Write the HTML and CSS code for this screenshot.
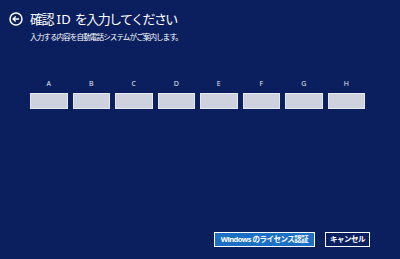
FILE: index.html
```html
<!DOCTYPE html>
<html lang="ja">
<head>
<meta charset="utf-8">
<link rel="stylesheet" href="styles.css">
</head>
<body>
<div class="page">
  <div class="header">
    <svg class="back" width="14" height="14" viewBox="0 0 14 14">
      <circle cx="7" cy="7" r="6" fill="none" stroke="#fff" stroke-width="1.5"/>
      <path d="M10.2 7H4.2M6.7 4.4L4.1 7L6.7 9.6" fill="none" stroke="#fff" stroke-width="1.4"/>
    </svg>
    <h1 class="title">確認 <span class="latin">ID</span> を入力してください</h1>
  </div>
  <p class="sub">入力する内容を自動電話システムがご案内します。</p>
  <div class="grid">
    <div class="cell"><span class="lbl">A</span><div class="box"></div></div>
    <div class="cell"><span class="lbl">B</span><div class="box"></div></div>
    <div class="cell"><span class="lbl">C</span><div class="box"></div></div>
    <div class="cell"><span class="lbl">D</span><div class="box"></div></div>
    <div class="cell"><span class="lbl">E</span><div class="box"></div></div>
    <div class="cell"><span class="lbl">F</span><div class="box"></div></div>
    <div class="cell"><span class="lbl">G</span><div class="box"></div></div>
    <div class="cell"><span class="lbl">H</span><div class="box"></div></div>
  </div>
  <div class="actions">
    <button class="btn primary">Windows のライセンス認証</button>
    <button class="btn">キャンセル</button>
  </div>
</div>
</body>
</html>
```
FILE: styles.css
```css
html, body {
  margin: 0;
  padding: 0;
  background: #0b1f5f;
}
.page {
  width: 400px;
  height: 259px;
  box-sizing: border-box;
  display: flex;
  flex-direction: column;
  font-family: "Noto Sans", "Noto Sans CJK JP", sans-serif;
  color: #fff;
}
.header {
  display: flex;
  align-items: center;
  gap: 7px;
  padding: 11px 0 0 9px;
  height: 16px;
}
.back {
  display: block;
}
.title {
  margin: 0;
  font-size: 13px;
  font-weight: 400;
  line-height: 16px;
  letter-spacing: -1.6px;
  word-spacing: 2px;
}
.latin {
  letter-spacing: 0.3px;
}
.sub {
  margin: 5px 0 0 30px;
  font-size: 7.5px;
  line-height: 10px;
  letter-spacing: -0.85px;
}
.grid {
  margin: 38px 0 0 30px;
  display: grid;
  grid-template-columns: repeat(8, 37.5px);
  column-gap: 5px;
}
.cell {
  display: flex;
  flex-direction: column;
  align-items: center;
  gap: 5px;
}
.lbl {
  font-size: 7px;
  line-height: 8px;
  color: #e4e7f0;
}
.box {
  width: 100%;
  height: 16px;
  box-sizing: border-box;
  background: #ced2de;
  border: 1px solid #e8eaf1;
}
.actions {
  margin-top: auto;
  margin-bottom: 12px;
  margin-right: 30px;
  display: flex;
  justify-content: flex-end;
  gap: 10px;
}
.btn {
  height: 15px;
  box-sizing: border-box;
  border: 1px solid #fff;
  background: #0b1f5f;
  color: #fff;
  font-family: "Noto Sans", "Noto Sans CJK JP", sans-serif;
  font-size: 7.5px;
  font-weight: 700;
  line-height: 13px;
  padding: 0;
  width: 45px;
  letter-spacing: -0.5px;
}
.btn.primary {
  width: 101px;
  background: #1b6fc4;
}
```
